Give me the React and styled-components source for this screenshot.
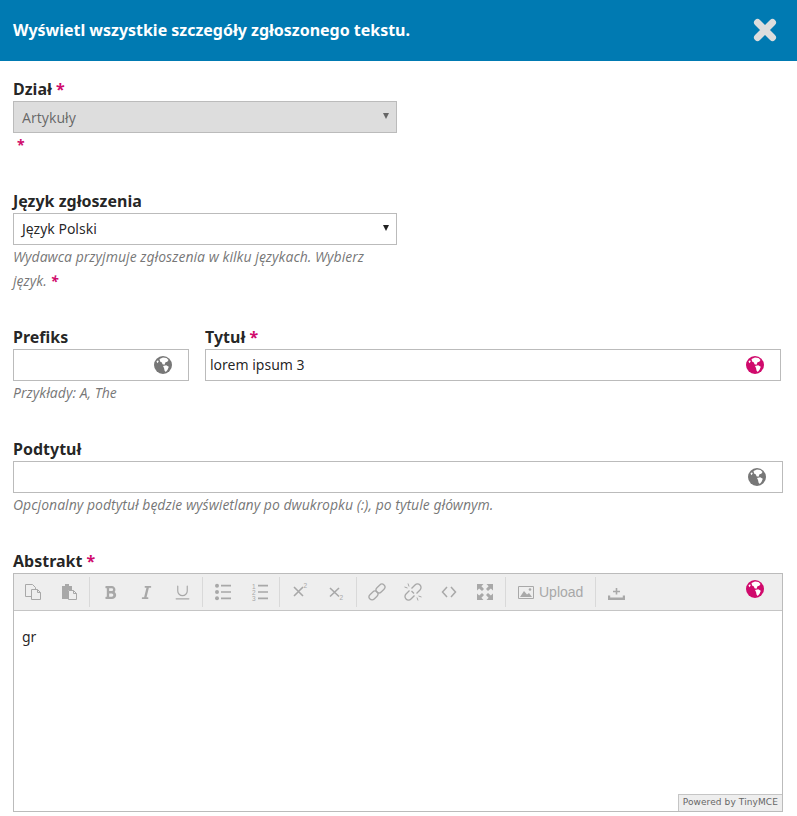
import React from 'react';
import styled, { createGlobalStyle } from 'styled-components';
import { FaBold, FaItalic } from 'react-icons/fa';
import { Underline } from 'lucide-react';

const PINK = '#d00a6c';

const GlobalStyle = createGlobalStyle`
    html, body {
        margin: 0;
        padding: 0;
        background: #fff;
    }
    body {
        font-family: "Noto Sans", sans-serif;
        font-size: 14px;
        color: rgba(0,0,0,0.87);
    }
`;

const Page = styled.div`
    width: 797px;
    height: 816px;
    overflow: hidden;
`;

const Header = styled.header`
    height: 61px;
    box-sizing: border-box;
    background: #007ab2;
    display: flex;
    align-items: center;
    justify-content: space-between;
    padding: 0 20px 2px 13px;
`;

const HeaderTitle = styled.h2`
    margin: 0;
    font-size: 16px;
    font-weight: 700;
    letter-spacing: -0.02px;
    color: #fff;
`;

const Form = styled.form`
    padding: 16px 14px 0 13px;
`;

const Section = styled.section`
    margin-bottom: 31px;
`;

const Row = styled.div`
    display: flex;
    gap: 16px;
    margin-bottom: 32px;
`;

const Cell = styled.div`
    width: ${p => p.$width}px;
    flex: none;
`;

const Label = styled.div`
    font-size: 16px;
    font-weight: 700;
    line-height: 24px;
`;

const Required = styled.span`
    color: ${PINK};
    font-weight: 700;
`;

const Select = styled.div`
    width: 384px;
    height: 32px;
    box-sizing: border-box;
    border: 1px solid #bbb;
    padding: 0 8px;
    display: flex;
    align-items: center;
    justify-content: space-between;
    background: ${p => (p.$disabled ? '#ddd' : '#fff')};
    color: ${p => (p.$disabled ? 'rgba(0,0,0,0.54)' : 'rgba(0,0,0,0.87)')};
    &::after {
        content: '';
        border-left: 3px solid transparent;
        border-right: 3px solid transparent;
        border-top: 6px solid currentColor;
        margin-right: -1px;
        margin-top: -2px;
    }
`;

const Help = styled.div`
    font-size: 14px;
    font-style: italic;
    line-height: 24.5px;
    color: rgba(0,0,0,0.54);
    max-width: ${p => (p.$narrow ? '384px' : 'none')};
`;

const StarLine = styled.div`
    line-height: 24.5px;
    padding-left: 4px;
`;

const Input = styled.div`
    height: 32px;
    box-sizing: border-box;
    border: 1px solid #bbb;
    display: flex;
    align-items: center;
    justify-content: space-between;
    padding: 0 16px 0 4px;
    background: #fff;
`;

const GlobeSvg = styled.svg`
    display: block;
    color: ${p => (p.$active ? PINK : '#777')};
`;

const Globe = ({ active }) => (
    <GlobeSvg $active={active} width="18" height="18" viewBox="0 0 18 18">
        <circle cx="9" cy="9" r="9" fill="currentColor" />
        <path fill="#fff" d="M5.5 3l3.5-1.6 3.5.6 2 2-1.2 1.8-1.8.4-1 2.6-2-.6-.6-1.8-1.8-1zM9 10l3.2-.8 2.6 1.6-1.2 3-1.8 2.2-1.2-1.2-.6-2.8zM2.4 5.4l1.6-1.2.7 1.4-1.2 1.6z" />
    </GlobeSvg>
);

const Editor = styled.div`
    width: 770px;
    height: 239px;
    box-sizing: border-box;
    border: 1px solid #bbb;
    display: flex;
    flex-direction: column;
    position: relative;
`;

const Toolbar = styled.div`
    height: 37px;
    flex: none;
    box-sizing: border-box;
    background: #eee;
    border-bottom: 1px solid #c5c5c5;
    display: flex;
    align-items: center;
    padding: 1px 0 0 1px;
`;

const ToolGroup = styled.div`
    display: flex;
    align-items: center;
    height: 30px;
    padding: 0 2px;
    &:first-child {
        padding-left: 0;
    }
    &:not(:first-child) {
        border-left: 1px solid #d9d9d9;
    }
`;

const ToolButton = styled.div`
    width: 36px;
    height: 30px;
    display: flex;
    align-items: center;
    justify-content: center;
    color: #a8a8a8;
    svg {
        display: block;
    }
`;

const UploadButton = styled(ToolButton)`
    width: 85px;
    box-sizing: border-box;
    justify-content: flex-start;
    padding-left: 8px;
    gap: 3px;
    font-family: "Liberation Sans", Arial, sans-serif;
    font-size: 14px;
`;

const ToolbarGlobe = styled.div`
    position: absolute;
    top: 6px;
    right: 18px;
`;

const Content = styled.div`
    flex: 1;
    padding: 14px 8px;
    font-size: 14px;
    line-height: 24px;
`;

const PoweredBy = styled.div`
    position: absolute;
    right: 0;
    bottom: 0;
    height: 17px;
    box-sizing: border-box;
    padding: 0 4px;
    border: 1px solid #c5c5c5;
    border-right: 0;
    border-bottom: 0;
    background: #eee;
    font-family: "DejaVu Sans", sans-serif;
    font-size: 9px;
    letter-spacing: 0.1px;
    line-height: 15px;
    color: #666;
`;

const Icon = ({ children }) => (
    <svg width="20" height="20" viewBox="0 0 20 20" fill="none" stroke="currentColor" strokeWidth="1">
        {children}
    </svg>
);

const CloseIcon = () => (
    <svg width="24" height="24" viewBox="0 0 24 24" fill="none" stroke="#ddd" strokeWidth="7" strokeLinecap="round">
        <path d="M4.5 4.5l15 15M19.5 4.5l-15 15" />
    </svg>
);

const CopyIcon = () => (
    <Icon>
        <path d="M2.5 2.5h7l3 3v9h-10z" />
        <path fill="#eee" d="M8.5 7.5h6l3 3v7h-9z" />
        <path d="M14.5 7.5v3h3" />
    </Icon>
);

const PasteIcon = () => (
    <Icon>
        <path fill="currentColor" stroke="none" d="M3 4h3V2h4v2h3v4H9v9H3z" />
        <path fill="#eee" stroke="currentColor" d="M9.5 8.5h5l3 3v6h-8z" />
        <path d="M14.5 8.5v3h3" />
    </Icon>
);

const BulletIcon = () => (
    <Icon>
        <circle cx="4" cy="3.7" r="2" fill="currentColor" stroke="none" />
        <circle cx="4" cy="10" r="2" fill="currentColor" stroke="none" />
        <circle cx="4" cy="16.3" r="2" fill="currentColor" stroke="none" />
        <path strokeWidth="1.7" d="M8 3.7h10M8 10h10M8 16.3h10" />
    </Icon>
);

const SmallDigit = styled.text`
    font-family: "Liberation Sans", sans-serif;
    font-size: 6.5px;
    fill: currentColor;
    stroke: none;
`;

const NumberIcon = () => (
    <Icon>
        <SmallDigit x="3" y="6.5">1</SmallDigit>
        <SmallDigit x="3" y="12.5">2</SmallDigit>
        <SmallDigit x="3" y="18.5">3</SmallDigit>
        <path strokeWidth="1.7" d="M9 3.7h10M9 10h10M9 16.3h10" />
    </Icon>
);

const SuperIcon = () => (
    <Icon>
        <path strokeWidth="1.6" d="M4 5l9 9M13 5l-9 9" />
        <SmallDigit x="13.5" y="6">2</SmallDigit>
    </Icon>
);

const SubIcon = () => (
    <Icon>
        <path strokeWidth="1.6" d="M4 6l9 8.5M13 6l-9 8.5" />
        <SmallDigit x="13.5" y="18">2</SmallDigit>
    </Icon>
);

const LinkIcon = () => (
    <Icon>
        <rect x="8.5" y="3.5" width="10" height="6" rx="3" strokeWidth="1.3" transform="rotate(-45 13.5 6.5)" />
        <rect x="1.5" y="10.5" width="10" height="6" rx="3" strokeWidth="1.3" transform="rotate(-45 6.5 13.5)" />
    </Icon>
);

const UnlinkIcon = () => (
    <Icon>
        <path strokeWidth="1.3" d="M8.5 6.5l3.5-3.5a3.4 3.4 0 0 1 5 5l-3.5 3.5M8.5 9l2.5 2.5" />
        <path strokeWidth="1.3" d="M11.5 13.5L8 17a3.4 3.4 0 0 1-5-5l3.5-3.5" />
        <path d="M5 1.5l1 3M1.5 5l3 1M15 18.5l-1-3M18.5 15l-3-1" />
    </Icon>
);

const CodeIcon = () => (
    <Icon>
        <path strokeWidth="1.5" d="M8 5l-4.5 5L8 15M12 5l4.5 5-4.5 5" />
    </Icon>
);

const ARROW_CORNER = 'M2 2h6.5L6.4 4.2 9 7 7 9 4.2 6.4 2 8.5z';

const FullscreenIcon = () => (
    <svg width="20" height="20" viewBox="0 0 20 20" fill="currentColor">
        <path d={ARROW_CORNER} />
        <path d={ARROW_CORNER} transform="matrix(-1 0 0 1 20 0)" />
        <path d={ARROW_CORNER} transform="matrix(1 0 0 -1 0 20)" />
        <path d={ARROW_CORNER} transform="matrix(-1 0 0 -1 20 20)" />
    </svg>
);

const ImageIcon = () => (
    <Icon>
        <path d="M2.5 4.5h15v12h-15z" />
        <path fill="currentColor" stroke="none" d="M4 15l4-6 3 3.5 2-1.5 3 4z" />
        <circle cx="14" cy="7.5" r="1.3" fill="currentColor" stroke="none" />
    </Icon>
);

const UploadIcon = () => (
    <Icon>
        <path strokeWidth="1.6" d="M10.5 6v6.5M7 9.5h7" />
        <path fill="currentColor" stroke="none" d="M2 13.5h2.2v2h12.6v-2H19V18H2z" />
    </Icon>
);

function App() {
    return (
        <Page>
            <GlobalStyle />
            <Header>
                <HeaderTitle>Wyświetl wszystkie szczegóły zgłoszonego tekstu.</HeaderTitle>
                <CloseIcon />
            </Header>
            <Form>
                <Section>
                    <Label>Dział <Required>*</Required></Label>
                    <Select $disabled>Artykuły</Select>
                    <StarLine><Required>*</Required></StarLine>
                </Section>
                <Section>
                    <Label>Język zgłoszenia</Label>
                    <Select>Język Polski</Select>
                    <Help $narrow>
                        Wydawca przyjmuje zgłoszenia w kilku językach. Wybierz język. <Required>*</Required>
                    </Help>
                </Section>
                <Row>
                    <Cell $width={176}>
                        <Label>Prefiks</Label>
                        <Input><span /><Globe /></Input>
                        <Help>Przykłady: A, The</Help>
                    </Cell>
                    <Cell $width={576}>
                        <Label>Tytuł <Required>*</Required></Label>
                        <Input>lorem ipsum 3<Globe active /></Input>
                    </Cell>
                </Row>
                <Section>
                    <Label>Podtytuł</Label>
                    <Input><span /><Globe /></Input>
                    <Help>Opcjonalny podtytuł będzie wyświetlany po dwukropku (:), po tytule głównym.</Help>
                </Section>
                <Label>Abstrakt <Required>*</Required></Label>
                <Editor>
                    <Toolbar>
                        <ToolGroup>
                            <ToolButton><CopyIcon /></ToolButton>
                            <ToolButton><PasteIcon /></ToolButton>
                        </ToolGroup>
                        <ToolGroup>
                            <ToolButton><FaBold size={15} /></ToolButton>
                            <ToolButton><FaItalic size={15} /></ToolButton>
                            <ToolButton><Underline size={19} strokeWidth={1.5} /></ToolButton>
                        </ToolGroup>
                        <ToolGroup>
                            <ToolButton><BulletIcon /></ToolButton>
                            <ToolButton><NumberIcon /></ToolButton>
                        </ToolGroup>
                        <ToolGroup>
                            <ToolButton><SuperIcon /></ToolButton>
                            <ToolButton><SubIcon /></ToolButton>
                        </ToolGroup>
                        <ToolGroup>
                            <ToolButton><LinkIcon /></ToolButton>
                            <ToolButton><UnlinkIcon /></ToolButton>
                            <ToolButton><CodeIcon /></ToolButton>
                            <ToolButton><FullscreenIcon /></ToolButton>
                        </ToolGroup>
                        <ToolGroup>
                            <UploadButton><ImageIcon />Upload</UploadButton>
                        </ToolGroup>
                        <ToolGroup>
                            <ToolButton><UploadIcon /></ToolButton>
                        </ToolGroup>
                    </Toolbar>
                    <ToolbarGlobe><Globe active /></ToolbarGlobe>
                    <Content>gr</Content>
                    <PoweredBy>Powered by TinyMCE</PoweredBy>
                </Editor>
            </Form>
        </Page>
    );
}

export default App;
